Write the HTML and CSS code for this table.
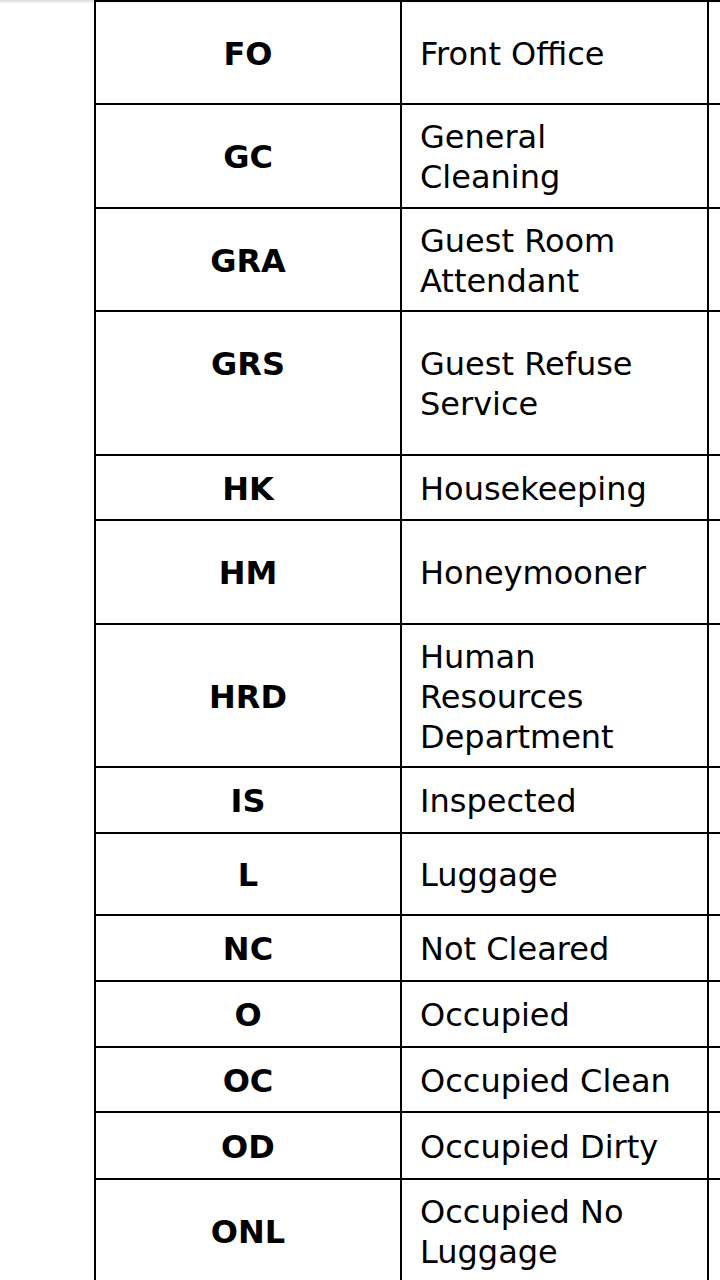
FILE: index.html
```html
<!DOCTYPE html>
<html lang="en">
<head>
<meta charset="utf-8">
<title>Abbreviations</title>
<link rel="stylesheet" href="styles.css">
</head>
<body>
<div class="top-shadow"></div>
<div class="sheet">
  <div class="abbr">FO</div><div class="desc">Front Office</div><div class="extra"></div>
  <div class="abbr">GC</div><div class="desc">General Cleaning</div><div class="extra"></div>
  <div class="abbr">GRA</div><div class="desc">Guest Room Attendant</div><div class="extra"></div>
  <div class="abbr">GRS<br>&nbsp;</div><div class="desc">Guest Refuse Service</div><div class="extra"></div>
  <div class="abbr">HK</div><div class="desc">Housekeeping</div><div class="extra"></div>
  <div class="abbr">HM</div><div class="desc">Honeymooner</div><div class="extra"></div>
  <div class="abbr">HRD</div><div class="desc">Human Resources Department</div><div class="extra"></div>
  <div class="abbr">IS</div><div class="desc">Inspected</div><div class="extra"></div>
  <div class="abbr">L</div><div class="desc">Luggage</div><div class="extra"></div>
  <div class="abbr">NC</div><div class="desc">Not Cleared</div><div class="extra"></div>
  <div class="abbr">O</div><div class="desc">Occupied</div><div class="extra"></div>
  <div class="abbr">OC</div><div class="desc">Occupied Clean</div><div class="extra"></div>
  <div class="abbr">OD</div><div class="desc">Occupied Dirty</div><div class="extra"></div>
  <div class="abbr">ONL</div><div class="desc">Occupied No Luggage</div><div class="extra"></div>
</div>
</body>
</html>
```
FILE: styles.css
```css
html, body {
  margin: 0;
  padding: 0;
  background: #ffffff;
  overflow: hidden;
}

body {
  width: 720px;
  height: 1280px;
  font-family: "DejaVu Sans", Verdana, sans-serif;
  color: #000;
}

.top-shadow {
  position: fixed;
  top: 0;
  left: 0;
  right: 0;
  height: 4px;
  background: linear-gradient(rgba(0, 0, 0, 0.14), rgba(0, 0, 0, 0));
  z-index: 2;
}

.sheet {
  margin-left: 94px;
  width: 626px;
  box-sizing: border-box;
  display: grid;
  grid-template-columns: 306px 307px 11px;
  grid-template-rows: 103px 104px 103px 144px 65px 104px 143px 66px 82px 66px 66px 65px 67px 104px;
  border-left: 2px solid #000;
  border-top: 2px solid #000;
}

.abbr, .desc, .extra {
  box-sizing: border-box;
  border-right: 2px solid #000;
  border-bottom: 2px solid #000;
  display: flex;
  align-items: center;
  padding-top: 2px;
  font-size: 32px;
  line-height: 40px;
}

.extra {
  border-right: none;
}

.abbr {
  justify-content: center;
  text-align: center;
  font-weight: bold;
}

.desc {
  padding-left: 18px;
  padding-right: 22px;
}
```
